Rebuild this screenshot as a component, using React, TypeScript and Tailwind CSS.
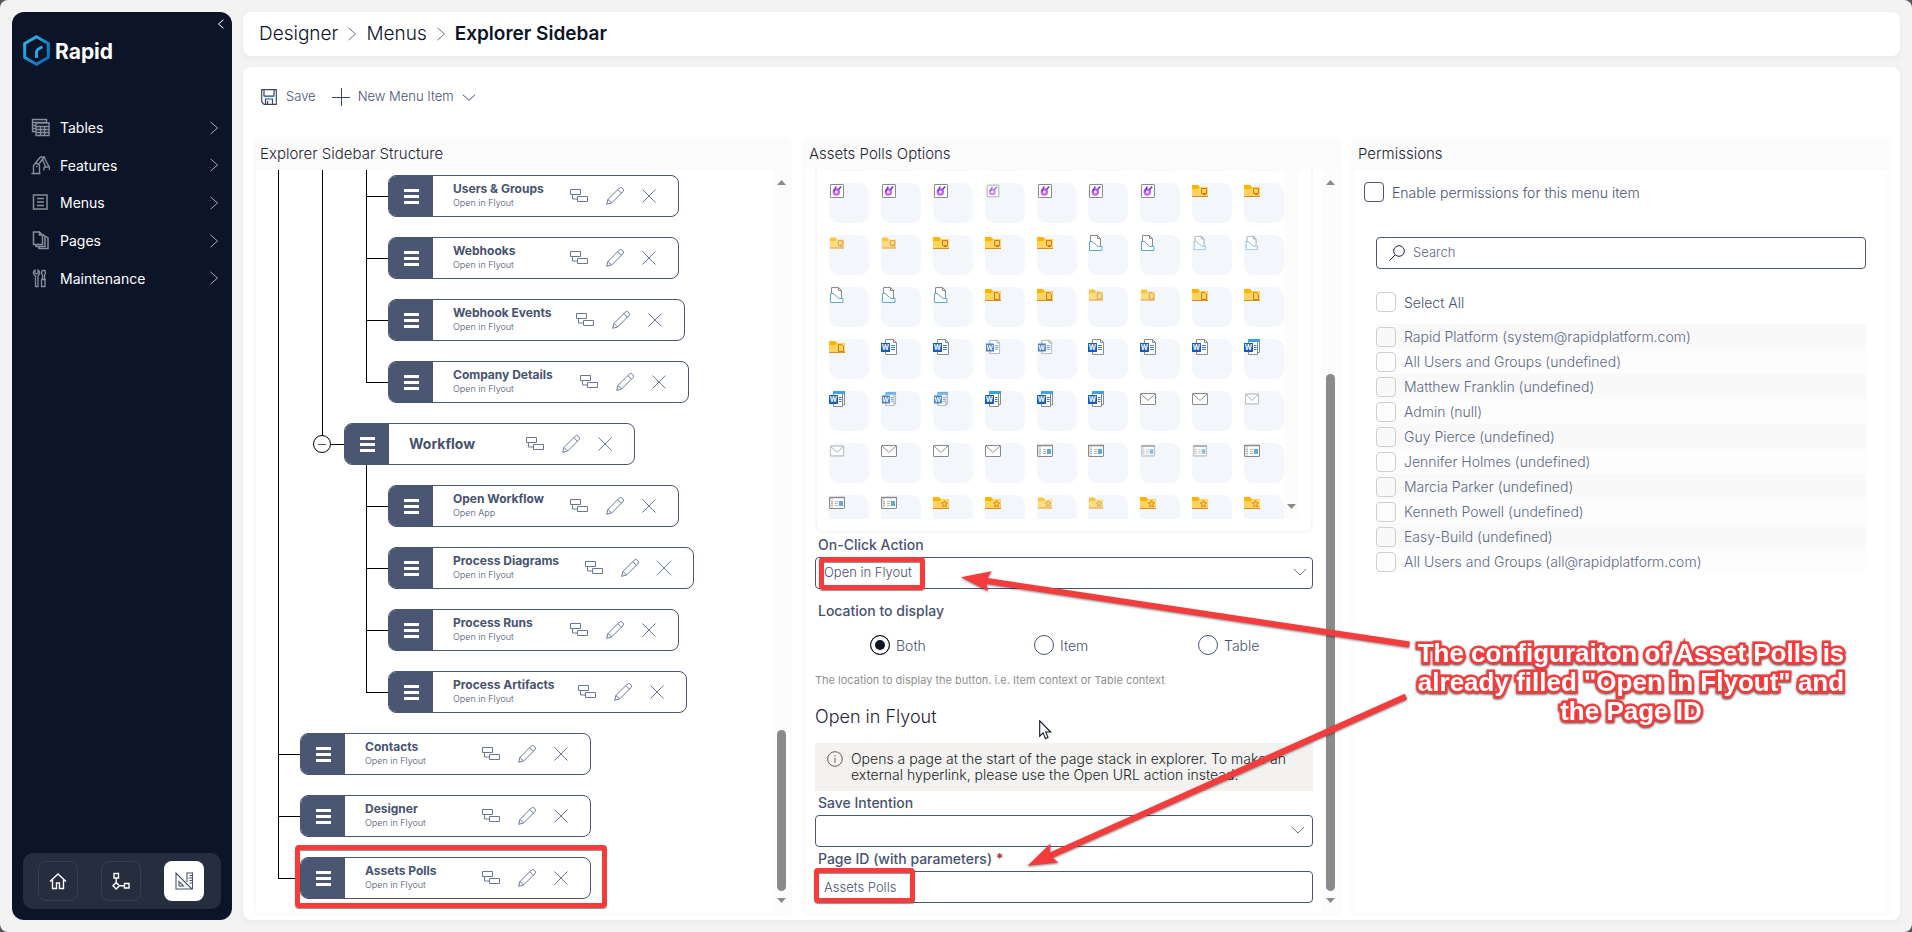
import React from "react";

type Guide = "line" | "tee" | "end" | "fold" | "blank";

type TreeItem = {
  title: string;
  action?: string;
  guides: Guide[];
  width: string;
  marked?: boolean;
};

const treeItems: TreeItem[] = [
  { title: "Users & Groups", action: "Open in Flyout", guides: ["line", "line", "tee"], width: "w-[291px]" },
  { title: "Webhooks", action: "Open in Flyout", guides: ["line", "line", "tee"], width: "w-[291px]" },
  { title: "Webhook Events", action: "Open in Flyout", guides: ["line", "line", "tee"], width: "w-[297px]" },
  { title: "Company Details", action: "Open in Flyout", guides: ["line", "line", "end"], width: "w-[301px]" },
  { title: "Workflow", guides: ["line", "fold"], width: "w-[291px]" },
  { title: "Open Workflow", action: "Open App", guides: ["line", "blank", "tee"], width: "w-[291px]" },
  { title: "Process Diagrams", action: "Open in Flyout", guides: ["line", "blank", "tee"], width: "w-[306px]" },
  { title: "Process Runs", action: "Open in Flyout", guides: ["line", "blank", "tee"], width: "w-[291px]" },
  { title: "Process Artifacts", action: "Open in Flyout", guides: ["line", "blank", "end"], width: "w-[299px]" },
  { title: "Contacts", action: "Open in Flyout", guides: ["tee"], width: "w-[291px]" },
  { title: "Designer", action: "Open in Flyout", guides: ["tee"], width: "w-[291px]" },
  { title: "Assets Polls", action: "Open in Flyout", guides: ["end"], width: "w-[291px]", marked: true },
];

const people = [
  "Rapid Platform (system@rapidplatform.com)",
  "All Users and Groups (undefined)",
  "Matthew Franklin (undefined)",
  "Admin (null)",
  "Guy Pierce (undefined)",
  "Jennifer Holmes (undefined)",
  "Marcia Parker (undefined)",
  "Kenneth Powell (undefined)",
  "Easy-Build (undefined)",
  "All Users and Groups (all@rapidplatform.com)",
];

type TileKind =
  | "none" | "loop" | "folderScreen" | "doc" | "folderDoc" | "word" | "wordStack" | "mail" | "list" | "folderStar";

/* A trailing "~" marks the paler variant of an icon. */
const tileRows: string[][] = [
  ["none", "none", "none", "none", "none", "none", "none", "none", "none"],
  ["loop", "loop", "loop", "loop~", "loop", "loop", "loop", "folderScreen", "folderScreen"],
  ["folderScreen~", "folderScreen~", "folderScreen", "folderScreen", "folderScreen", "doc", "doc", "doc~", "doc~"],
  ["doc", "doc", "doc", "folderDoc", "folderDoc", "folderDoc~", "folderDoc~", "folderDoc", "folderDoc"],
  ["folderDoc", "word", "word", "word~", "word~", "word", "word", "word", "wordStack"],
  ["wordStack", "wordStack~", "wordStack~", "wordStack", "wordStack", "wordStack", "mail", "mail", "mail~"],
  ["mail~", "mail", "mail", "mail", "list", "list", "list~", "list~", "list"],
  ["list", "list", "folderStar", "folderStar", "folderStar~", "folderStar~", "folderStar", "folderStar", "folderStar"],
];

function Folder({ children }: { children: React.ReactNode }) {
  return (
    <>
      <path d="M0 4h16v10H0z" fill="#ffd35c" />
      <path d="M0 2h6l2 2-2 2H0z" fill="#ffb300" />
      <path d="M0 13h16v1H0z" fill="#dd8a2b" />
      {children}
    </>
  );
}

function TileIcon({ kind }: { kind: TileKind }) {
  switch (kind) {
    case "loop":
      return (
        <>
          <rect x="1.5" y="1.5" width="13" height="13" rx=".5" fill="#fff" stroke="#8a8a8a" />
          <circle cx="7.300" cy="9" r="2.600" fill="none" stroke="#c65cf5" strokeWidth="2.200" />
          <path d="M7.200 3.500 4.800 8.500M9.300 6.800l2.900-3.400" fill="none" stroke="#6a3bea" strokeWidth="1.600" />
        </>
      );
    case "folderScreen":
      return (
        <Folder>
          <path d="M9.500 5.500h5v5h-5zM11 11.500h3" fill="none" stroke="#cf7b1e" />
        </Folder>
      );
    case "folderDoc":
      return (
        <Folder>
          <path d="M9.500 5.500h3l2 2v5h-5z" fill="none" stroke="#cf7b1e" />
        </Folder>
      );
    case "folderStar":
      return (
        <Folder>
          <path d="m11.500 5.700 1 2 2 .3-1.500 1.500.4 2.200-1.900-1-1.900 1 .4-2.200L8.500 8l2-.3z" fill="none" stroke="#cf7b1e" strokeWidth=".9" />
        </Folder>
      );
    case "doc":
      return (
        <>
          <path d="M2.500 7V.5h7l3 3V12" fill="#fff" stroke="#8a8a8a" />
          <path d="M9.500.5v3h3" fill="none" stroke="#8a8a8a" />
          <path d="M1.500 15.500v-9h2.500l6 5h4v4z" fill="#fff" stroke="#5fa8dc" />
        </>
      );
    case "word":
      return (
        <>
          <path d="M4.500.5h8l3 3v12h-11z" fill="#fff" stroke="#8a8a8a" />
          <path d="M12.500.5v3h3" fill="none" stroke="#8a8a8a" />
          <path d="M10 6.500h4M10 8.500h4M10 10.500h4" fill="none" stroke="#3a7fd0" />
          <path d="M0 4h9v9H0z" fill="#185abd" />
          <text x="4.500" y="11" fontSize="7" fontWeight="700" textAnchor="middle" fill="#fff">W</text>
        </>
      );
    case "wordStack":
      return (
        <>
          <path d="M4.500 2.500h9v13h-9z" fill="#fff" stroke="#8a8a8a" />
          <path d="M6.500.5h9v13h-2" fill="none" stroke="#8a8a8a" />
          <path d="M4 0h12v3H4z" fill="#3ba0e6" />
          <path d="M10 6.500h2.500M10 8.500h2.500M10 10.500h2.500" stroke="#3a6fc0" />
          <path d="M0 4h9v9H0z" fill="#185abd" />
          <text x="4.500" y="11" fontSize="7" fontWeight="700" textAnchor="middle" fill="#fff">W</text>
        </>
      );
    case "mail":
      return (
        <>
          <rect x=".5" y="2.500" width="15" height="11" rx=".5" fill="#fff" stroke="#8a8a8a" />
          <path d="m1 3 6.500 6h1L15 3" fill="none" stroke="#8a8a8a" />
        </>
      );
    case "list":
      return (
        <>
          <rect x=".5" y="2.500" width="15" height="11" rx=".5" fill="#fff" stroke="#8a8a8a" />
          <path d="M1 3h3v10H1z" fill="#e3e3e3" />
          <path d="M0 2.500h16" stroke="#8a8a8a" strokeWidth="1.500" />
          <path d="M2 6.500h2M2 8.500h2M2 10.500h2M6 6.500h3M6 8.500h3M6 10.500h3" stroke="#b5b5b5" />
          <path d="M10 6h4v5h-4z" fill="#5fa8e4" />
        </>
      );
    default:
      return null;
  }
}

function Tile({ code }: { code: string }) {
  const faded = code.endsWith("~");
  const kind = code.replace("~", "") as TileKind;
  return (
    <button type="button" aria-label="Choose icon" className="flex h-10 w-10 items-start rounded-[9px] bg-[#f3f7fc]">
      <svg viewBox="0 0 16 16" className={faded ? "h-4 w-4 scale-90 opacity-75" : "h-4 w-4"} aria-hidden="true">
        <TileIcon kind={kind} />
      </svg>
    </button>
  );
}

function Chevron({ dir, className }: { dir: "right" | "left" | "down"; className: string }) {
  const d = dir === "right" ? "M4 1l8 7-8 7" : dir === "left" ? "M12 1L4 8l8 7" : "M1 4l7 8 7-8";
  return (
    <svg viewBox="0 0 16 16" preserveAspectRatio="none" fill="none" stroke="currentColor" className={className} aria-hidden="true">
      <path d={d} vectorEffect="non-scaling-stroke" />
    </svg>
  );
}

function HalfGuides({ guide }: { guide: Guide }) {
  if (guide === "blank") return <div className="w-[44px] shrink-0" />;
  if (guide === "line")
    return (
      <div className="flex w-[44px] shrink-0 justify-end">
        <div className="w-[22px] border-l border-black" />
      </div>
    );
  if (guide === "fold")
    return (
      <div className="relative flex w-[44px] shrink-0 justify-end">
        <div className="flex w-[22px] flex-col">
          <div className="flex-1 border-b border-l border-black" />
          <div className="flex-1" />
        </div>
        <button
          type="button"
          aria-label="Collapse Workflow"
          className="absolute top-[22px] left-[13px] flex h-[18px] w-[18px] items-center justify-center rounded-full border border-black bg-white"
        >
          <span className="h-px w-2 bg-[#555]" />
        </button>
      </div>
    );
  return (
    <div className="flex w-[44px] shrink-0 justify-end">
      <div className="flex w-[22px] flex-col">
        <div className="flex-1 border-b border-l border-black" />
        <div className={guide === "tee" ? "flex-1 border-l border-black" : "flex-1"} />
      </div>
    </div>
  );
}

function TreeCard({ item }: { item: TreeItem }) {
  return (
    <div className={`relative flex h-[42px] rounded-[8px] border border-[#4a5672] bg-white ${item.width}`}>
      <button type="button" aria-label={`Move ${item.title}`} className="flex w-[44px] shrink-0 flex-col items-center justify-center gap-[3px] rounded-l-[7px] bg-[#4a5672]">
        <span className="h-[3px] w-[15px] bg-white" />
        <span className="h-[3px] w-[15px] bg-white" />
        <span className="h-[3px] w-[15px] bg-white" />
      </button>
      <div className="flex flex-1 flex-col justify-center pl-[20px] whitespace-nowrap text-[#46526f]">
        {item.action ? (
          <div className="flex flex-col pb-[2px]">
            <span className="text-[12px] leading-[15px] font-bold">{item.title}</span>
            <span className="text-[9px] leading-[14px] font-light">{item.action}</span>
          </div>
        ) : (
          <span className="text-[14px] leading-5 font-bold">{item.title}</span>
        )}
      </div>
      <div className="flex shrink-0 items-center gap-[18px] pr-[22px] text-[#6a7797]">
        <button type="button" aria-label="Add child">
          <svg viewBox="0 0 18 14" fill="none" stroke="currentColor" className="h-[14px] w-[18px]">
            <path d="M.5.5h10v5H.5zM7.500 7.500h10v5h-10zM2.500 5.500v4.500h5" />
          </svg>
        </button>
        <button type="button" aria-label="Edit">
          <svg viewBox="0 0 18 18" fill="none" stroke="currentColor" className="h-[18px] w-[18px]">
            <path d="M.7 17.300 2 12.400 13.300 1.100a2 2 0 0 1 2.900 0l.7.7a2 2 0 0 1 0 2.900L5.600 16zM2 12.400 5.600 16M11.800 2.600l3.600 3.600" />
          </svg>
        </button>
        <button type="button" aria-label="Remove">
          <svg viewBox="0 0 14 14" fill="none" stroke="currentColor" className="h-[14px] w-[14px]">
            <path d="M.5.5l13 13M13.500.5l-13 13" />
          </svg>
        </button>
      </div>
      {item.marked && <Highlight className="-top-[13px] -right-[17px] -bottom-[10px] -left-[6px]" />}
    </div>
  );
}

function ScrollRail({ thumb }: { thumb: string }) {
  return (
    <div className="flex w-[15px] shrink-0 flex-col items-center bg-[#fcfcfc] pt-[10px] pb-[10px]" aria-hidden="true">
      <svg viewBox="0 0 9 5" className="h-[5px] w-[9px] fill-[#8a8a8a]"><path d="M4.500 0 9 5H0z" /></svg>
      <div className="flex w-[9px] flex-1 flex-col justify-end pt-[7px] pb-[7px]">
        <div className={`rounded-full bg-[#8a8a8a] ${thumb}`} />
      </div>
      <svg viewBox="0 0 9 5" className="h-[5px] w-[9px] fill-[#8a8a8a]"><path d="M0 0h9L4.500 5z" /></svg>
    </div>
  );
}

function Panel({ title, children }: { title: string; children: React.ReactNode }) {
  return (
    <section className="flex min-h-0 min-w-0 flex-1 flex-col rounded-[6px] border-[3px] border-t-0 border-[#fbfbfb] bg-white">
      <h2 className="flex h-[33px] shrink-0 items-center bg-[#fbfbfb] pt-[2px] pl-1 text-[15px] font-light text-[#1d2433]">{title}</h2>
      <div className="flex min-h-0 flex-1">{children}</div>
    </section>
  );
}

function Highlight({ className }: { className: string }) {
  return (
    <span
      className={`pointer-events-none absolute rounded-[4px] border-[5px] border-[#f43c3c] shadow-[0_1px_1px_rgba(0,0,0,0.45),inset_0_1px_1px_rgba(0,0,0,0.45)] ${className}`}
    />
  );
}

const fieldLabel = "flex h-6 items-center pb-[2px] pl-[3px] text-[14px] font-medium text-[#475270]";
const field = "h-8 w-full appearance-none rounded-[4px] border border-[#4a5672] bg-white px-[8px] text-[13px] font-light text-[#475270] outline-none";

const navIcons: Record<string, React.ReactNode> = {
  Tables: (
    <path d="M4.500 13.500h-3v-12h14v3M1.500 4.500h14M1.500 7.500h3M1.500 10.500h3M5 5h13v12.500H5zM5 8.500h13M5 11.500h13M5 14.500h13M9.500 8.500v9M13.500 8.500v9" strokeWidth="1.400" />
  ),
  Features: (
    <path d="M.5 17.500h9M2.500 17V9.500l2-2h2l2 2V17M5 10.500h1.500M4 7.500 9.500 1h3.500l-5 7M13 1l4.500 9M11.500 3.500l3 7M14.500 10.500l-1.500 1v3M17.500 10l1 1v3M13 11h4.500" strokeWidth="1.400" />
  ),
  Menus: <path d="M2.500 2h13.500v14H2.500zM6 5.500h7M6 9h7M6 12.500h7" strokeWidth="1.500" />,
  Pages: (
    <path d="M2.500 1h6l3 3v9.500h-9zM8.500 1v3h3M5 13.500v2h9V5.500l-2-2M8 16v1.500h9V7l-3-2" strokeWidth="1.500" />
  ),
  Maintenance: (
    <path d="M4 1v3l1.500 1L7 4V1a3 3 0 0 1 1 4.500L7 7v10.500H4.500V7L3 5.500A3 3 0 0 1 4 1zM11 1.500h3l.5 3-1 1.500v4M11 1.500l-.5 3 1 1.500v4M10 10.500h5M10.500 10.500v7h3.500v-7" strokeWidth="1.300" />
  ),
};

function Sidebar() {
  return (
    <aside className="flex w-[220px] shrink-0 flex-col rounded-[12px] bg-[#0c1427] px-[11px] pb-[11px] text-white">
      <div className="flex h-[23px] items-end justify-end">
        <button type="button" aria-label="Collapse sidebar" className="-mr-[5px] pb-[6px]">
          <Chevron dir="left" className="h-[10px] w-[10px]" />
        </button>
      </div>
      <div className="flex h-[31px] items-center gap-[5px]">
        <svg viewBox="0 0 27 31" className="h-[31px] w-[27px]" fill="none">
          <defs>
            <linearGradient id="hex" x1="0" y1="0" x2="1" y2="1">
              <stop offset="0" stopColor="#35b9ee" />
              <stop offset="1" stopColor="#0565b5" />
            </linearGradient>
          </defs>
          <path d="M13.500 1.800 25.300 8.500v14L13.500 29.200 1.700 22.500v-14z" stroke="url(#hex)" strokeWidth="3" />
          <path d="M13.500 23v-5.500q0-2.500 2-3.500l4-2.200" stroke="#27a5e2" strokeWidth="3" />
        </svg>
        <span className="pt-[2px] text-[21px] leading-none font-bold">Rapid</span>
      </div>
      <nav className="mt-[43px] flex h-[188px] flex-col">
        {["Tables", "Features", "Menus", "Pages", "Maintenance"].map((name) => (
          <a key={name} href="#" className="flex flex-1 items-center pl-[8px] text-[14px]">
            <svg viewBox="0 0 19 19" className="mr-[10px] h-[19px] w-[19px] text-[#868c98]" fill="none" stroke="currentColor">
              {navIcons[name]}
            </svg>
            <span className="flex-1">{name}</span>
            <Chevron dir="right" className="h-[14px] w-[14px] text-[#a5aab4]" />
          </a>
        ))}
      </nav>
      <div className="mt-auto flex h-14 items-center gap-[23px] rounded-[10px] bg-[#252d3f] px-[15px]">
        <button type="button" aria-label="Home" className="flex h-10 w-10 items-center justify-center rounded-[8px] border border-[#363e50]">
          <svg viewBox="0 0 18 18" className="h-[18px] w-[18px]" fill="none" stroke="currentColor" strokeWidth="1.400">
            <path d="M1 9.500 9 2l8 7.500M3.500 8v8.500h4V11h3v5.500h4V8" />
          </svg>
        </button>
        <button type="button" aria-label="Workflow" className="flex h-10 w-10 items-center justify-center rounded-[8px] border border-[#363e50]">
          <svg viewBox="0 0 18 18" className="h-[18px] w-[18px]" fill="none" stroke="currentColor" strokeWidth="1.400">
            <path d="M2 1.500h4.500V6H2zM4.200 6v4.500M12.500 11.500H17V16h-4.500zM7.500 13.700h5M4.200 10.500l3.200 3.200-3.200 3.200L1 13.700z" />
          </svg>
        </button>
        <button type="button" aria-label="Designer" className="flex h-10 w-10 items-center justify-center rounded-[8px] bg-white text-[#46526f]">
          <svg viewBox="0 0 18 18" className="h-[18px] w-[18px]" fill="none" stroke="currentColor" strokeWidth="1.100">
            <path d="M1 1v16h16zM4 9.500V14h4.500zM12 10V1h5.500v16M14.500 3.500h3M13.500 6h4M14.500 8.500h3M14.500 11h3" />
          </svg>
        </button>
      </div>
    </aside>
  );
}

function StructurePanel() {
  return (
    <Panel title="Explorer Sidebar Structure">
      <div className="flex min-h-0 flex-1 flex-col justify-end overflow-hidden pb-1">
        {treeItems.map((item) => (
          <div key={item.title} className="flex h-[62px] shrink-0">
            {item.guides.map((g, i) => (
              <HalfGuides key={i} guide={g} />
            ))}
            <div className="flex flex-col">
              <div className="h-[10px]" />
              <TreeCard item={item} />
              <div className={item.action ? "h-[10px]" : "ml-[22px] h-[10px] border-l border-black"} />
            </div>
          </div>
        ))}
      </div>
      <ScrollRail thumb="h-[161px]" />
    </Panel>
  );
}

function OptionsPanel() {
  return (
    <Panel title="Assets Polls Options">
      <div className="flex min-h-0 min-w-0 flex-1 flex-col pr-[10px] pb-[10px] pl-[10px]">
        <div className="flex min-h-0 flex-1 rounded-b-[8px] border-2 border-t-0 border-[#f3f7fc] px-[12px] pb-[12px]">
          <div className="min-h-0 flex-1 overflow-hidden">
            <div className="-mt-[39px] grid grid-cols-9 gap-3">
              {tileRows.flat().map((code, i) => (
                <Tile key={i} code={code} />
              ))}
            </div>
          </div>
          <div className="flex w-[15px] flex-col items-center justify-end bg-[#fcfcfc] pb-[10px]" aria-hidden="true">
            <svg viewBox="0 0 9 5" className="h-[5px] w-[9px] fill-[#8a8a8a]"><path d="M0 0h9L4.500 5z" /></svg>
          </div>
        </div>

        <label htmlFor="click-action" className={fieldLabel}>On-Click Action</label>
        <div className="relative">
          <select id="click-action" className={field} defaultValue="flyout">
            <option value="flyout">Open in Flyout</option>
          </select>
          <Chevron dir="down" className="pointer-events-none absolute top-[9px] right-[6px] h-[12px] w-[14px] text-[#6b7488]" />
          <Highlight className="top-0 -bottom-[1px] left-[4px] w-[106px]" />
        </div>

        <div role="radiogroup" aria-labelledby="location-label" className="pt-[10px]">
          <div id="location-label" className={fieldLabel}>Location to display</div>
          <div className="flex h-[46px] items-center pb-[2px] pl-[55px] text-[14px] font-light text-[#475270]">
            {["Both", "Item", "Table"].map((name) => (
              <label key={name} className="flex w-[164px] shrink-0 items-center gap-[6px] last:w-auto">
                <input
                  type="radio"
                  name="location"
                  defaultChecked={name === "Both"}
                  className="h-5 w-5 appearance-none rounded-full border border-[#4a5672] bg-white checked:border-[#0c1427] checked:bg-[#0c1427] checked:shadow-[inset_0_0_0_4px_#fff]"
                />
                {name}
              </label>
            ))}
          </div>
        </div>
        <p className="flex h-[22px] items-center text-[11px] text-[#8f8f8f]">
          The location to display the button. i.e. Item context or Table context
        </p>
        <h3 className="flex h-[52px] items-center pb-[2px] text-[18px] font-light text-[#1d2433]">Open in Flyout</h3>
        <div className="flex h-12 items-start gap-[8px] bg-[#f3f2f1] pt-[8px] pl-[12px] text-[#201f1e]">
          <svg viewBox="0 0 16 16" className="h-4 w-4 shrink-0 text-[#605e5c]" fill="none" stroke="currentColor">
            <circle cx="8" cy="8" r="7.300" />
            <path d="M8 6.800v5M8 4.200v1.200" />
          </svg>
          <p className="text-[14px] leading-[16px] font-light">
            Opens a page at the start of the page stack in explorer. To make an<br />
            external hyperlink, please use the Open URL action instead.
          </p>
        </div>
        <label htmlFor="save-intention" className={fieldLabel}>Save Intention</label>
        <div className="relative">
          <select id="save-intention" className={field} defaultValue="">
            <option value=""></option>
          </select>
          <Chevron dir="down" className="pointer-events-none absolute top-[9px] right-[8px] h-[12px] w-[14px] text-[#6b7488]" />
        </div>
        <label htmlFor="page-id" className={fieldLabel}>
          Page ID (with parameters)<span className="pl-1 text-[#a4262c]">*</span>
        </label>
        <div className="relative">
          <input id="page-id" type="text" defaultValue="Assets Polls" className={field} />
          <Highlight className="-top-[3px] bottom-0 -left-[1px] w-[101px]" />
        </div>
      </div>
      <ScrollRail thumb="h-[517px]" />
    </Panel>
  );
}

const paleBox = "h-5 w-5 shrink-0 appearance-none rounded-[4px] border border-[#cfcfcf]";

function PermissionsPanel() {
  return (
    <Panel title="Permissions">
      <div className="flex flex-1 flex-col pt-[12px] text-[14px] font-light text-[#475270]">
        <label className="flex h-5 items-center gap-2 pl-[10px]">
          <input type="checkbox" className="h-5 w-5 appearance-none rounded-[4px] border border-[#4a5672] bg-white" />
          Enable permissions for this menu item
        </label>
        <div className="mt-[35px] mr-[21px] ml-[22px] flex flex-col">
          <label className="flex h-8 items-center gap-[8px] rounded-[4px] border border-[#4a5672] pl-[12px]">
            <svg viewBox="0 0 16 16" className="h-4 w-4 text-[#1d2433]" fill="none" stroke="currentColor">
              <circle cx="10" cy="6" r="5.300" />
              <path d="M6.200 9.800.5 15.500" />
            </svg>
            <input type="text" placeholder="Search" aria-label="Search" className="h-7 flex-1 bg-transparent pb-[2px] text-[13px] outline-none placeholder:text-[#5b6680]" />
          </label>
          <label className="mt-[23px] flex h-5 items-center gap-2">
            <input type="checkbox" className={paleBox} />
            Select All
          </label>
          <ul className="mt-[12px] text-[#5d6985]">
            {people.map((name) => (
              <li key={name} className="odd:bg-[#f9f9f9] even:bg-[#fdfdfd]">
                <label className="flex h-[25px] items-center gap-2">
                  <input type="checkbox" className={paleBox} />
                  {name}
                </label>
              </li>
            ))}
          </ul>
        </div>
      </div>
    </Panel>
  );
}

function Annotations() {
  return (
    <div className="pointer-events-none absolute inset-0">
      <svg width="1912" height="932" viewBox="0 0 1912 932" className="absolute top-0 left-0 drop-shadow-[0_1px_1px_rgba(0,0,0,0.5)]" aria-hidden="true">
        <g stroke="#f43c3c" strokeWidth="6" fill="none">
          <path d="M984 580.500 1409.500 644.500" />
          <path d="M1047 857 1406 696.500" />
        </g>
        <g fill="#f43c3c">
          <path d="M961 577.300 991.500 571.300 986 581 988 591z" />
          <path d="M1027.500 865.800 1050.500 843.500 1050 855.500 1058.500 862.500z" />
        </g>
      </svg>
      <svg viewBox="0 0 13 20" className="absolute top-[720px] left-[1039px] h-[20px] w-[13px]" aria-hidden="true">
        <path d="M.7.8v15.400l3.400-3.300 2.300 5.600 2.600-1.100-2.300-5.400h5z" fill="#fff" stroke="#0c1427" strokeWidth="1.100" />
      </svg>
      <p className="absolute top-[639px] left-[1401px] w-[460px] text-center font-['Liberation_Sans',Arial,sans-serif] text-[26px] leading-[29px] font-bold text-white drop-shadow-[0_1px_1px_rgba(0,0,0,0.7)] [-webkit-text-stroke:5px_#f43c3c] [paint-order:stroke_fill]">
        The configuraiton of Asset Polls is<br />
        already filled "Open in Flyout" and<br />
        the Page ID
      </p>
    </div>
  );
}

export default function App() {
  return (
    <div className="h-screen bg-[#55555f] font-['Inter',sans-serif]">
      <div className="relative flex h-full gap-[11px] overflow-hidden rounded-[8px] bg-[#f3f3f3] p-[12px]">
        <Sidebar />
        <main className="flex min-w-0 flex-1 flex-col gap-[11px]">
          <nav aria-label="Breadcrumb" className="flex h-11 shrink-0 items-center rounded-[8px] bg-white pl-[16px] text-[19px] text-[#0c1427] shadow-[0_2px_6px_rgba(0,0,0,0.05)]">
            <a href="#" className="font-light">Designer</a>
            <Chevron dir="right" className="mx-[7px] h-[14px] w-[14px] text-[#6b7488]" />
            <a href="#" className="font-light">Menus</a>
            <Chevron dir="right" className="mx-[7px] h-[14px] w-[14px] text-[#6b7488]" />
            <span className="font-semibold">Explorer Sidebar</span>
          </nav>
          <div className="flex min-h-0 flex-1 flex-col rounded-[8px] bg-white px-[10px] pb-1 shadow-[0_2px_6px_rgba(0,0,0,0.05)]">
            <div className="flex h-[70px] shrink-0 items-center pb-[10px] pl-[8px] text-[13px] font-light text-[#475270]">
              <button type="button" className="flex items-center gap-[9px]">
                <svg viewBox="0 0 16 16" className="h-4 w-4" fill="none" stroke="#3c4660" strokeWidth="1.200">
                  <path d="M.7.7h14.600v14.600H3L.7 13zM3 1v6h10V1M4.500 15v-5h7v5M6.500 12v3" />
                  <path d="M3 7.500h10" stroke="#2a7fd0" />
                </svg>
                Save
              </button>
              <button type="button" className="ml-[16px] flex items-center gap-[8px]">
                <svg viewBox="0 0 18 18" className="h-[18px] w-[18px]" fill="none" stroke="#3c4660">
                  <path d="M9.500 0v18M0 9.500h18" />
                </svg>
                New Menu Item
                <Chevron dir="down" className="h-[11px] w-[14px]" />
              </button>
            </div>
            <div className="flex min-h-0 flex-1 gap-[10px]">
              <StructurePanel />
              <OptionsPanel />
              <PermissionsPanel />
            </div>
          </div>
        </main>
        <Annotations />
      </div>
    </div>
  );
}
